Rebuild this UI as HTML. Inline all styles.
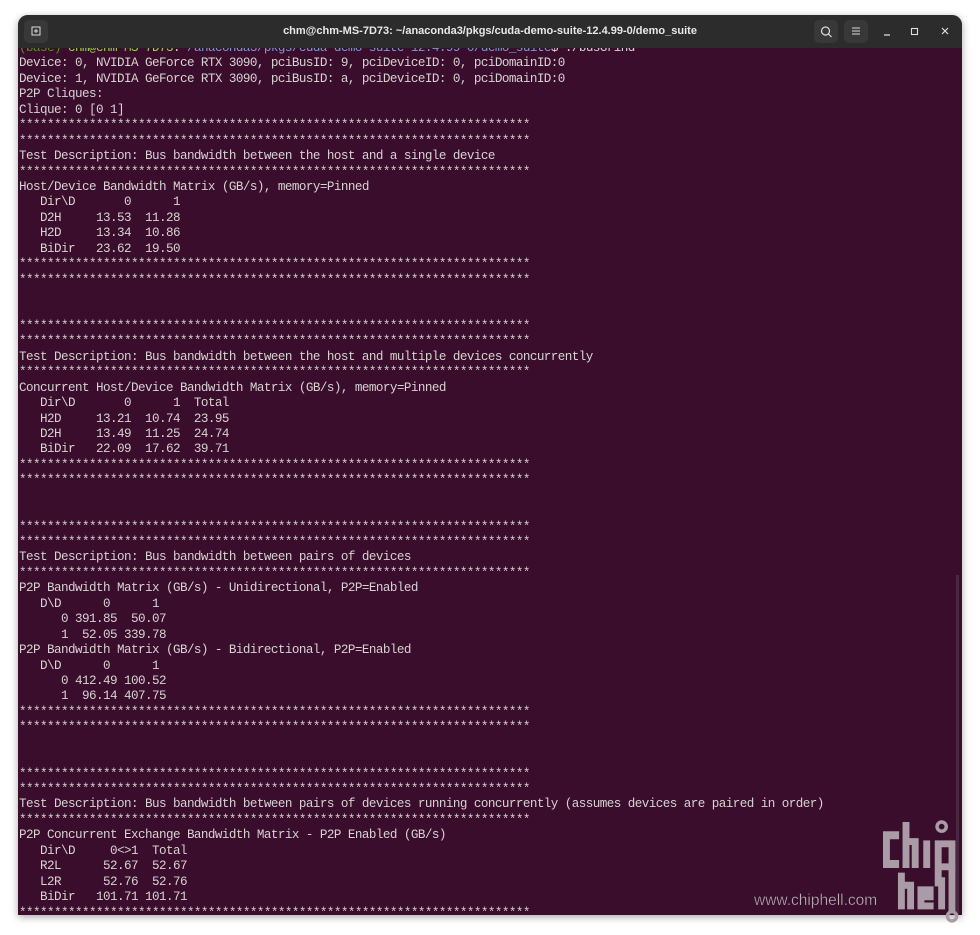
<!DOCTYPE html>
<html><head><meta charset="utf-8"><style>
html,body{margin:0;padding:0;background:#fff;width:980px;height:935px;overflow:hidden}
.win{position:absolute;left:18px;top:15px;width:944px;height:900px;background:#3a0d2d;border-radius:10px 10px 0 0;box-shadow:0 2px 8px rgba(0,0,0,.35);overflow:hidden}
.tb{position:absolute;left:0;top:0;width:944px;height:33px;background:#2c2c2c;color:#e8e8e8;font:600 11px "Liberation Sans",sans-serif}
.tb .t{position:absolute;left:0;right:0;top:10px;text-align:center}
.btn{position:absolute;top:5px;width:24px;height:23px;background:#383838;border-radius:5px}
.term{position:absolute;left:0;top:33px;width:944px;height:867px;overflow:hidden}
pre{position:absolute;left:1px;top:-7px;margin:0;font-family:"Liberation Mono",monospace;font-size:12.6px;letter-spacing:-0.56px;line-height:15.43px;color:#d6d3d0}
.sb{position:absolute;right:3px;top:527px;width:3px;height:373px;background:#4c2742}
.wm{position:absolute;left:752px;top:818px}
</style></head><body>
<div class="win">
<div class="tb"><div class="btn" style="left:6px"><svg width="24" height="23"><rect x="8" y="7" width="8" height="8" fill="none" stroke="#ddd" stroke-width="1"/><path d="M12 9v4M10 11h4" stroke="#ddd"/></svg></div>
<div class="t">chm@chm-MS-7D73: ~/anaconda3/pkgs/cuda-demo-suite-12.4.99-0/demo_suite</div>
<div class="btn" style="left:796px"><svg width="24" height="23"><circle cx="11.5" cy="11" r="4" fill="none" stroke="#ddd" stroke-width="1.2"/><path d="M14.5 14l3 3" stroke="#ddd" stroke-width="1.2"/></svg></div>
<div class="btn" style="left:826px"><svg width="24" height="23"><path d="M8 8h8M8 11h8M8 14h8" stroke="#ddd"/></svg></div>
<svg style="position:absolute;left:860px;top:8px" width="84" height="18"><path d="M6 12h6" stroke="#ddd" stroke-width="1.2"/><rect x="33.5" y="5.5" width="6" height="6" fill="none" stroke="#ddd" stroke-width="1.1"/><path d="M64 5l6 6M70 5l-6 6" stroke="#ddd" stroke-width="1.2"/></svg>
</div>
<div class="term"><pre><span style="color:#4e9a06">(base) </span><span style="color:#8ae234">chm@chm-MS-7D73</span>:<span style="color:#729fcf">~/anaconda3/pkgs/cuda-demo-suite-12.4.99-0/demo_suite</span>$ ./busGrind
Device: 0, NVIDIA GeForce RTX 3090, pciBusID: 9, pciDeviceID: 0, pciDomainID:0
Device: 1, NVIDIA GeForce RTX 3090, pciBusID: a, pciDeviceID: 0, pciDomainID:0
P2P Cliques:
Clique: 0 [0 1]
*************************************************************************
*************************************************************************
Test Description: Bus bandwidth between the host and a single device
*************************************************************************
Host/Device Bandwidth Matrix (GB/s), memory=Pinned
   Dir\D       0      1
   D2H     13.53  11.28
   H2D     13.34  10.86
   BiDir   23.62  19.50
*************************************************************************
*************************************************************************


*************************************************************************
*************************************************************************
Test Description: Bus bandwidth between the host and multiple devices concurrently
*************************************************************************
Concurrent Host/Device Bandwidth Matrix (GB/s), memory=Pinned
   Dir\D       0      1  Total
   H2D     13.21  10.74  23.95
   D2H     13.49  11.25  24.74
   BiDir   22.09  17.62  39.71
*************************************************************************
*************************************************************************


*************************************************************************
*************************************************************************
Test Description: Bus bandwidth between pairs of devices
*************************************************************************
P2P Bandwidth Matrix (GB/s) - Unidirectional, P2P=Enabled
   D\D      0      1
      0 391.85  50.07
      1  52.05 339.78
P2P Bandwidth Matrix (GB/s) - Bidirectional, P2P=Enabled
   D\D      0      1
      0 412.49 100.52
      1  96.14 407.75
*************************************************************************
*************************************************************************


*************************************************************************
*************************************************************************
Test Description: Bus bandwidth between pairs of devices running concurrently (assumes devices are paired in order)
*************************************************************************
P2P Concurrent Exchange Bandwidth Matrix - P2P Enabled (GB/s)
   Dir\D     0&lt;&gt;1  Total
   R2L      52.67  52.67
   L2R      52.76  52.76
   BiDir   101.71 101.71
*************************************************************************
</pre><div class="sb"></div></div>
</div>
<div class="wm">
<svg width="228" height="117" style="position:absolute;left:0;top:0">
<text x="2" y="87" font-family="Liberation Sans,sans-serif" font-size="15.5" fill="#bcb0b8" stroke="#2a0a20" stroke-width="0.3">www.chiphell.com</text>
<g fill="#aa9ca6" transform="translate(-35.75,-23.6) scale(1.15)">
<path d="M145 32h14v7h-8v18h8v7h-14z"/>
<path d="M162 24h6v14h8v26h-6v-20h-2v20h-6z"/>
<path d="M180 40h6v24h-6z"/>
<circle cx="196" cy="28" r="4" fill="none" stroke="#aa9ca6" stroke-width="3"/>
<path d="M190 40h18v26h-12v14h-6zM196 46v14h6v-14z"/>
<path d="M158 68h6v8h8v24h-6v-18h-2v18h-6z"/>
<path d="M175 80h14v12h-8v2h8v6h-14z"/>
<path d="M193 72h6v28h-6z"/>
<path d="M202 64h6v38h-6z"/>
<circle cx="205" cy="106" r="4" fill="none" stroke="#aa9ca6" stroke-width="3"/>
</g></svg></div>
</body></html>
